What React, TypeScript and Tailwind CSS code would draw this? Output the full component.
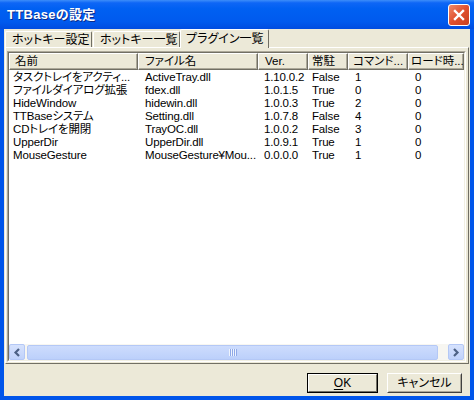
const COLS = [
  { label: "名前", w: "w-[129px]", hp: "pl-[5px]", dp: "pl-[4px]" },
  { label: "ファイル名", w: "w-[120px]", hp: "pl-[6px]", dp: "pl-[7px]" },
  { label: "Ver.", w: "w-[50px]", hp: "pl-[6px]", dp: "pl-[6px]" },
  { label: "常駐", w: "w-[40px]", hp: "pl-[3px]", dp: "pl-[4px]" },
  { label: "コマンド...", w: "w-[60px]", hp: "pl-[4px]", dp: "pl-[7px]" },
  { label: "ロード時...", w: "w-[56px]", hp: "pl-[2px]", dp: "pl-[7px]" },
];

const ROWS = [
  ["タスクトレイをアクティ...", "ActiveTray.dll", "1.10.0.2", "False", "1", "0"],
  ["ファイルダイアログ拡張", "fdex.dll", "1.0.1.5", "True", "0", "0"],
  ["HideWindow", "hidewin.dll", "1.0.0.3", "True", "2", "0"],
  ["TTBaseシステム", "Setting.dll", "1.0.7.8", "False", "4", "0"],
  ["CDトレイを開閉", "TrayOC.dll", "1.0.0.2", "False", "3", "0"],
  ["UpperDir", "UpperDir.dll", "1.0.9.1", "True", "1", "0"],
  ["MouseGesture", "MouseGesture¥Mou...", "0.0.0.0", "True", "1", "0"],
];

function Chevron({ dir }: { dir: "left" | "right" }) {
  return (
    <svg width="8" height="9" viewBox="0 0 8 9">
      <polyline
        points={dir === "left" ? "6,1 2.5,4.5 6,8" : "2,1 5.5,4.5 2,8"}
        fill="none"
        stroke="#4d6185"
        strokeWidth="2.2"
      />
    </svg>
  );
}

function ScrollButton({ dir }: { dir: "left" | "right" }) {
  return (
    <div className="w-[16px] h-[16px] flex items-center justify-center rounded-[2px] border border-[#b4c8f6] bg-[linear-gradient(180deg,#d6e2fd_0%,#c0d2fb_100%)]">
      <Chevron dir={dir} />
    </div>
  );
}

const TAB = "h-[16px] flex items-center whitespace-nowrap border-t border-l border-white border-r border-r-[#716f64] rounded-t-[2px]";

export default function App() {
  return (
    <div className="w-[474px] h-[400px] flex flex-col bg-[#0055ea] font-['Liberation_Sans','Noto_Sans_CJK_JP',sans-serif] [font-feature-settings:'palt'] text-black select-none">
      {/* Title bar */}
      <div className="h-[29px] flex items-center justify-between pl-[7px] pr-[4px] bg-[linear-gradient(180deg,#3d8df9_0%,#0e66f6_10%,#0060f2_30%,#005aee_75%,#004ce0_100%)]">
        <span className="text-white font-bold text-[13px] tracking-[0.3px] [text-shadow:1px_1px_0_#0a2a8a]">
          TTBaseの設定
        </span>
        <div className="w-[22px] h-[22px] flex items-center justify-center rounded-[3px] border border-white bg-[linear-gradient(135deg,#f08a6a_0%,#e0502e_50%,#c8401f_100%)]">
          <svg width="12" height="12" viewBox="0 0 12 12">
            <path d="M2 2 L10 10 M10 2 L2 10" stroke="white" strokeWidth="2.4" strokeLinecap="square" />
          </svg>
        </div>
      </div>

      {/* Client */}
      <div className="flex-1 flex flex-col mx-[4px] mb-[4px] bg-[#ece9d8]">
        {/* Tabs */}
        <div className="h-[18px] flex items-end pl-[1px] text-[12px] leading-none">
          <div className={`${TAB} w-[87px] pl-[6px]`}>ホットキー設定</div>
          <div className={`${TAB} ml-[1px] w-[87px] pl-[6px]`}>ホットキー一覧</div>
          <div className="relative z-10 -mb-[1px] w-[89px] h-[19px] flex items-center whitespace-nowrap pl-[5px] pb-[1px] bg-[#ece9d8] border-t border-l border-white border-r border-r-[#716f64] rounded-t-[2px]">
            プラグイン一覧
          </div>
        </div>

        {/* Tab page */}
        <div className="h-[317px] mx-[1px] flex flex-col border border-t-white border-l-white border-r-[#716f64] border-b-[#716f64] pl-[1px] pt-[3px] pr-[2px] pb-[1px]">
          {/* List view */}
          <div className="flex-1 flex flex-col border border-t-[#aca899] border-l-[#aca899] border-r-white border-b-white">
            <div className="flex-1 flex flex-col border border-t-[#716f64] border-l-[#716f64] border-r-[#f1efe2] border-b-[#f1efe2] bg-white">
              {/* Header */}
              <div className="h-[17px] flex text-[11.5px] leading-none bg-[#ece9d8]">
                {COLS.map((c) => (
                  <div
                    key={c.label}
                    className={`${c.w} ${c.hp} h-[17px] flex items-center whitespace-nowrap overflow-hidden border-t border-l border-white border-r border-r-[#716f64] border-b border-b-[#716f64] shadow-[inset_-1px_-1px_0_#aca899]`}
                  >
                    {c.label}
                  </div>
                ))}
              </div>

              {/* Rows */}
              <div className="flex-1 flex flex-col pt-[1px] text-[11.5px] tracking-[-0.15px]">
                {ROWS.map((r, i) => (
                  <div key={i} className="h-[13px] flex leading-[13px]">
                    {r.map((v, j) => (
                      <div key={j} className={`${COLS[j].w} ${COLS[j].dp} whitespace-nowrap overflow-hidden`}>
                        {v}
                      </div>
                    ))}
                  </div>
                ))}
              </div>

              {/* Horizontal scrollbar */}
              <div className="h-[16px] flex items-center bg-[#f7f6f1]">
                <ScrollButton dir="left" />
                <div className="flex-1 h-[16px] flex items-center pl-[2px] pr-[10px]">
                  <div className="flex-1 h-[15px] flex items-center justify-center rounded-[2px] border border-[#b4c8f6] bg-[linear-gradient(180deg,#cddcfd_0%,#bcd0fb_100%)]">
                    <div className="flex gap-[1px]">
                      <div className="w-[1px] h-[7px] bg-[#eef4fe] shadow-[1px_0_0_#8fa9e8]" />
                      <div className="w-[1px] h-[7px] bg-[#eef4fe] shadow-[1px_0_0_#8fa9e8]" />
                      <div className="w-[1px] h-[7px] bg-[#eef4fe] shadow-[1px_0_0_#8fa9e8]" />
                      <div className="w-[1px] h-[7px] bg-[#eef4fe] shadow-[1px_0_0_#8fa9e8]" />
                    </div>
                  </div>
                </div>
                <ScrollButton dir="right" />
              </div>
            </div>
          </div>
        </div>

        {/* Buttons */}
        <div className="flex-1 flex justify-end items-start pt-[9px] pr-[8px] gap-[9px] text-[12px]">
          <button className="w-[71px] h-[20px] border border-black bg-[#ece9d8] flex items-center justify-center">
            <span className="w-full h-full flex items-center justify-center border border-t-white border-l-white border-r-[#716f64] border-b-[#716f64]">
              <span className="underline underline-offset-2">O</span>K
            </span>
          </button>
          <button className="w-[75px] h-[20px] border border-t-white border-l-white border-r-[#404040] border-b-[#404040] bg-[#ece9d8] flex items-center justify-center">
            <span className="w-full h-full flex items-center justify-center border border-transparent border-r-[#aca899] border-b-[#aca899]">
              キャンセル
            </span>
          </button>
        </div>
      </div>
    </div>
  );
}
